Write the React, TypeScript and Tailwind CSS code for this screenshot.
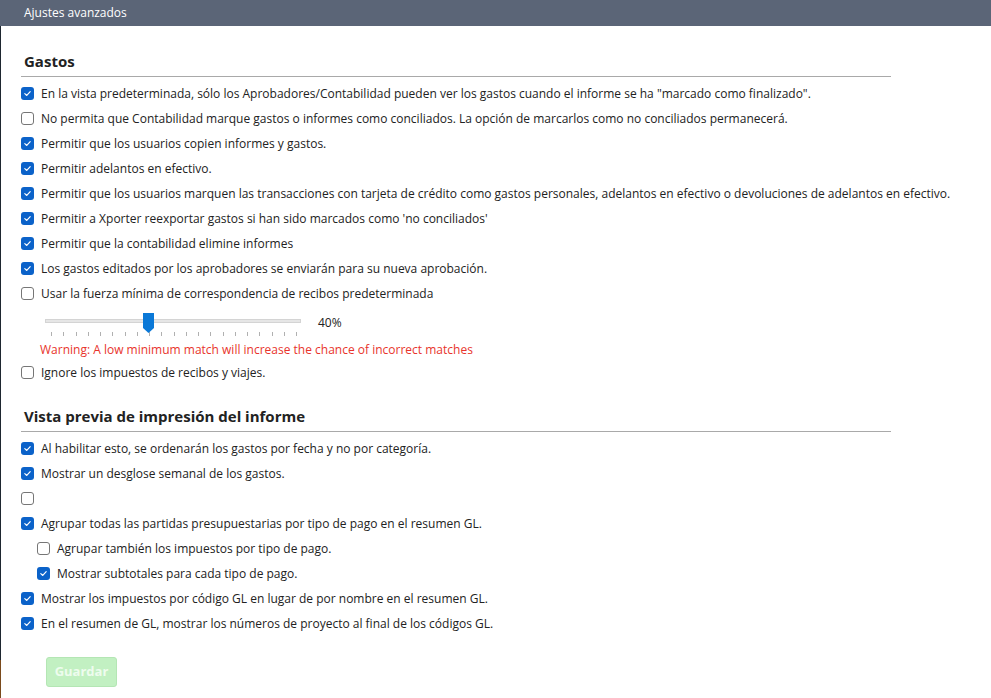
import React from "react";

const Check = ({ checked }: { checked: boolean }) =>
  checked ? (
    <span className="w-[13px] h-[13px] rounded-[3px] bg-[#0b62c9] flex items-center justify-center shrink-0">
      <svg width="9" height="9" viewBox="0 0 10 10">
        <path d="M2 5.2 L4.2 7.2 L8 3" fill="none" stroke="#fff" strokeWidth="1.3" strokeLinecap="round" strokeLinejoin="round" />
      </svg>
    </span>
  ) : (
    <span className="w-[13px] h-[13px] rounded-[3px] border border-[#767676] bg-white shrink-0" />
  );

const Row = ({ checked, text, indent }: { checked: boolean; text?: string; indent?: boolean }) => (
  <div className={"h-[25px] flex items-center gap-[7px] " + (indent ? "pl-[16px]" : "")}>
    <Check checked={checked} />
    {text && <span>{text}</span>}
  </div>
);

const Title = ({ children }: { children: React.ReactNode }) => (
  <div className="mr-[100px] border-b border-[#a9a9a9] pl-[3px] pb-[4px] text-[15px] font-bold text-[#222] leading-[22px]">
    {children}
  </div>
);

export default function App() {
  const ticks = Array.from({ length: 21 }, (_, i) => i);
  return (
    <div className="w-[991px] h-[698px] flex bg-white text-[#222] overflow-hidden" style={{ fontFamily: '"Open Sans", "Noto Sans", sans-serif' }}>
      <div className="w-px flex flex-col shrink-0">
        <div className="h-[26px] bg-[#5b6577]" />
        <div className="flex-1 bg-[#1e2730]" />
        <div className="h-[38px] bg-[#7a4a1c]" />
      </div>
      <div className="flex-1 flex flex-col">
        <div className="h-[26px] bg-[#5b6577] text-white text-[12px] flex items-center pl-[23px]">Ajustes avanzados</div>
        <div className="pl-[20px] pt-[24px] text-[12px]">
          <Title>Gastos</Title>
          <div className="pt-[4px]">
            <Row checked text={'En la vista predeterminada, sólo los Aprobadores/Contabilidad pueden ver los gastos cuando el informe se ha "marcado como finalizado".'} />
            <Row checked={false} text="No permita que Contabilidad marque gastos o informes como conciliados. La opción de marcarlos como no conciliados permanecerá." />
            <Row checked text="Permitir que los usuarios copien informes y gastos." />
            <Row checked text="Permitir adelantos en efectivo." />
            <Row checked text="Permitir que los usuarios marquen las transacciones con tarjeta de crédito como gastos personales, adelantos en efectivo o devoluciones de adelantos en efectivo." />
            <Row checked text="Permitir a Xporter reexportar gastos si han sido marcados como 'no conciliados'" />
            <Row checked text="Permitir que la contabilidad elimine informes" />
            <Row checked text="Los gastos editados por los aprobadores se enviarán para su nueva aprobación." />
            <Row checked={false} text="Usar la fuerza mínima de correspondencia de recibos predeterminada" />
            <div className="flex items-start pl-[24px] pt-[7px] h-[33px]">
              <div className="relative w-[256px] h-[26px]">
                <div className="absolute left-0 right-0 top-[6px] h-[4px] bg-[#e6e6e6] border border-[#d4d4d4]" />
                <div className="absolute left-[6px] right-[4px] top-[19px] flex justify-between">
                  {ticks.map((t) => (
                    <span key={t} className="w-px h-[4px] bg-[#b0b0b0]" />
                  ))}
                </div>
                <svg className="absolute left-[98px] top-0" width="11" height="20" viewBox="0 0 11 20">
                  <path d="M0 0 H11 V15 L5.5 20 L0 15 Z" fill="#0a78d7" />
                </svg>
              </div>
              <span className="ml-[17px] mt-[1px]">40%</span>
            </div>
            <div className="h-[21px] flex items-center pl-[19px] text-[#e8342c]">Warning: A low minimum match will increase the chance of incorrect matches</div>
            <Row checked={false} text="Ignore los impuestos de recibos y viajes." />
          </div>
          <div className="pt-[20px]">
            <Title>Vista previa de impresión del informe</Title>
          </div>
          <div className="pt-[4px]">
            <Row checked text="Al habilitar esto, se ordenarán los gastos por fecha y no por categoría." />
            <Row checked text="Mostrar un desglose semanal de los gastos." />
            <Row checked={false} />
            <Row checked text="Agrupar todas las partidas presupuestarias por tipo de pago en el resumen GL." />
            <Row indent checked={false} text="Agrupar también los impuestos por tipo de pago." />
            <Row indent checked text="Mostrar subtotales para cada tipo de pago." />
            <Row checked text="Mostrar los impuestos por código GL en lugar de por nombre en el resumen GL." />
            <Row checked text="En el resumen de GL, mostrar los números de proyecto al final de los códigos GL." />
          </div>
          <div className="pt-[21px] pl-[25px]">
            <button className="w-[71px] h-[30px] rounded-[3px] bg-[#c2f0c2] border border-[#b4e6b4] text-[#eefcee] font-bold text-[13px]">Guardar</button>
          </div>
        </div>
      </div>
    </div>
  );
}
